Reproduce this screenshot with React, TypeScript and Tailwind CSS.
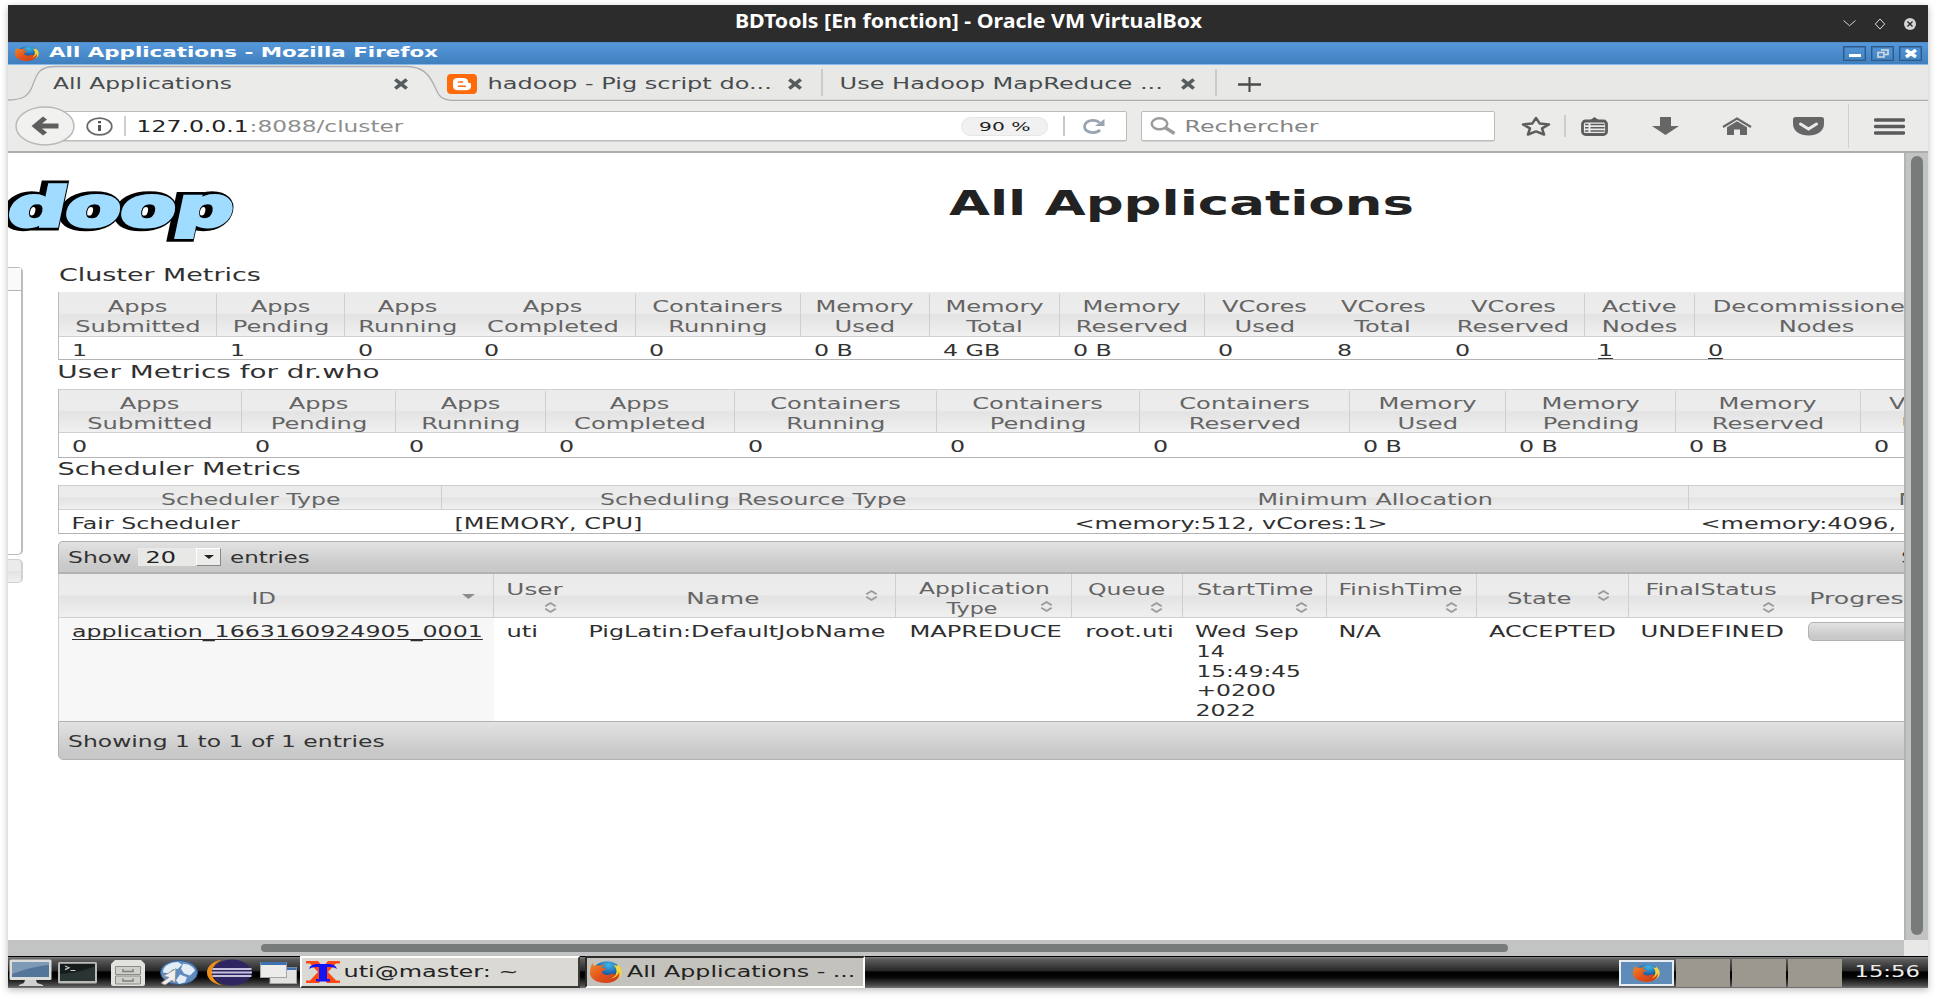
import { useLayoutEffect, useRef, type ReactNode } from "react";

/* Stretches a line of text horizontally until its ink fills w pixels. */
function Fit({ w, children, className = "", ink = "" }: { w: number; children: string; className?: string; ink?: string }) {
  const ref = useRef<HTMLSpanElement>(null);
  useLayoutEffect(() => {
    const el = ref.current;
    if (!el) return;
    const cs = getComputedStyle(el);
    const ctx = document.createElement("canvas").getContext("2d");
    if (!ctx) return;
    ctx.font = `${cs.fontWeight} ${cs.fontSize} ${cs.fontFamily}`;
    const m = ctx.measureText(children);
    const k = w / (m.actualBoundingBoxRight + m.actualBoundingBoxLeft);
    el.style.transform = `translateX(${m.actualBoundingBoxLeft * k}px) scaleX(${k})`;
  }, [w, children]);
  return (
    <span className={"block shrink-0 whitespace-nowrap " + className} style={{ width: w }}>
      <span ref={ref} className={"inline-block origin-left whitespace-pre " + ink}>
        {children}
      </span>
    </span>
  );
}

function Svg({ box, className, children }: { box: string; className: string; children: ReactNode }) {
  return (
    <svg viewBox={box} preserveAspectRatio="none" className={"block shrink-0 " + className}>
      {children}
    </svg>
  );
}

function Firefox({ className }: { className: string }) {
  return (
    <Svg box="0 0 32 32" className={className}>
      <defs>
        <radialGradient id="ffg" cx="0.55" cy="0.2" r="0.8">
          <stop offset="0" stopColor="#3fb6e8" />
          <stop offset="0.6" stopColor="#1b5fa8" />
          <stop offset="1" stopColor="#123a72" />
        </radialGradient>
        <linearGradient id="ffo" x1="0" y1="0" x2="1" y2="1">
          <stop offset="0" stopColor="#ee8a26" />
          <stop offset="0.5" stopColor="#e2521c" />
          <stop offset="1" stopColor="#c93a14" />
        </linearGradient>
      </defs>
      <circle cx="17" cy="14" r="13.5" fill="url(#ffg)" />
      <path d="M27 4c4 5 5 9 4.500 14-.5 5-4 9-8 11l-6-3c6-1 9-6 9-11 0-4-1-7-3-9 2 0 3 .5 4 1z" fill="#f7d43a" />
      <path d="M3 3c0 2 0 3 1 4 2-1 4-1 6 0 1-1 3-2 5-2-2 2-3 3-3 5l4 1c0 2-3 3-4 4 0 5 5 7 9 4 3-1 4 0 5 1-2 4-6 5-9 5 6 1 11-2 12-9 2 8-4 16-13 16C7 32 0 26 0 17 0 11 1 6 3 3z" fill="url(#ffo)" />
    </Svg>
  );
}

function CloseX({ className }: { className: string }) {
  return (
    <Svg box="0 0 14 12" className={"h-3 w-4 " + className}>
      <path d="M2 1.500L12 10.500M12 1.500L2 10.500" stroke="#565b5c" strokeWidth="3.200" />
    </Svg>
  );
}

function Sort({ className }: { className: string }) {
  return (
    <Svg box="0 0 12 11" className={"h-[11px] w-[13px] " + className}>
      <path d="M1.200 4.200L6 1l4.800 3.200M1.200 6.800L6 10l4.800-3.200" fill="none" stroke="#9a9a9a" strokeWidth="1.700" />
    </Svg>
  );
}

const HEAD = "bg-[linear-gradient(#ebebeb_0%,#ececec_48%,#e3e3e3_52%,#f0f0f0_100%)] text-[#646464]";

type Col = { w: string; a: string; b?: string; v: string; line?: boolean; link?: boolean };

const cluster: Col[] = [
  { w: "w-[158px]", a: "Apps", b: "Submitted", v: "1", line: true },
  { w: "w-[128px]", a: "Apps", b: "Pending", v: "1", line: true },
  { w: "w-[126px]", a: "Apps", b: "Running", v: "0" },
  { w: "w-[165px]", a: "Apps", b: "Completed", v: "0", line: true },
  { w: "w-[165px]", a: "Containers", b: "Running", v: "0", line: true },
  { w: "w-[129px]", a: "Memory", b: "Used", v: "0 B", line: true },
  { w: "w-[130px]", a: "Memory", b: "Total", v: "4 GB", line: true },
  { w: "w-[145px]", a: "Memory", b: "Reserved", v: "0 B", line: true },
  { w: "w-[119px]", a: "VCores", b: "Used", v: "0" },
  { w: "w-[118px]", a: "VCores", b: "Total", v: "8" },
  { w: "w-[143px]", a: "VCores", b: "Reserved", v: "0", line: true },
  { w: "w-[110px]", a: "Active", b: "Nodes", v: "1", line: true, link: true },
  { w: "w-[244px]", a: "Decommissioned", b: "Nodes", v: "0", line: true, link: true },
];

const user: Col[] = [
  { w: "w-[183px]", a: "Apps", b: "Submitted", v: "0", line: true },
  { w: "w-[154px]", a: "Apps", b: "Pending", v: "0", line: true },
  { w: "w-[150px]", a: "Apps", b: "Running", v: "0", line: true },
  { w: "w-[189px]", a: "Apps", b: "Completed", v: "0", line: true },
  { w: "w-[202px]", a: "Containers", b: "Running", v: "0", line: true },
  { w: "w-[203px]", a: "Containers", b: "Pending", v: "0", line: true },
  { w: "w-[210px]", a: "Containers", b: "Reserved", v: "0", line: true },
  { w: "w-[156px]", a: "Memory", b: "Used", v: "0 B", line: true },
  { w: "w-[170px]", a: "Memory", b: "Pending", v: "0 B", line: true },
  { w: "w-[185px]", a: "Memory", b: "Reserved", v: "0 B", line: true },
  { w: "w-[142px]", a: "VCores", b: "Used", v: "0", line: true },
];

function Metrics({ cols, head, row }: { cols: Col[]; head: string; row: string }) {
  return (
    <div className="w-[2000px] border-l border-[#bdbdbd]">
      <div className={"flex border-b border-b-[#d0d0d0] " + HEAD + " " + head}>
        {cols.map((c, i) => (
          <div key={i} className={"flex shrink-0 flex-col items-center " + c.w + (c.line ? " border-r border-[#cfcfcf]" : "")}>
            <div className="h-[3px] shrink-0" />
            <span className="scale-x-[1.61] leading-5">{c.a}</span>
            <span className="scale-x-[1.61] leading-5">{c.b}</span>
          </div>
        ))}
      </div>
      <div className={"flex border-b border-[#b4b4b4] text-[#333] " + row}>
        {cols.map((c, i) => (
          <div key={i} className={"shrink-0 pl-[13px] " + c.w}>
            <span className={"inline-block origin-left scale-x-[1.58] leading-5 " + (c.link ? "underline underline-offset-2" : "")}>{c.v}</span>
          </div>
        ))}
      </div>
    </div>
  );
}

function TitleBar() {
  return (
    <div className="flex h-[37px] bg-[#2c2c2c] pl-[728px] text-white">
      <Fit w={466} className='pt-[4px] font-["Noto_Sans",sans-serif] text-[19px] font-bold leading-[25px]'>
        BDTools [En fonction] - Oracle VM VirtualBox
      </Fit>
      <div className="ml-auto mr-3 flex items-center">
        <Svg box="0 0 13 8" className="h-[7px] w-[13px]">
          <path d="M.5.5l6 6 6-6" fill="none" stroke="#ddd" />
        </Svg>
        <Svg box="0 0 12 12" className="ml-[18px] h-3 w-3">
          <path d="M6 1l4.700 5L6 11 1.300 6z" fill="none" stroke="#ddd" />
        </Svg>
        <Svg box="0 0 12 12" className="ml-[18px] h-3 w-3">
          <circle cx="6" cy="6" r="6" fill="#d4d4d4" />
          <path d="M3.500 3.500l5 5M8.500 3.500l-5 5" stroke="#222" strokeWidth="1.200" />
        </Svg>
      </div>
    </div>
  );
}

function WindowBar() {
  const btn = "flex h-[15px] w-[23px] items-center justify-center border border-[#2d5a8c] shadow-[inset_0_0_0_1px_#3f76ad]";
  return (
    <div className="flex h-[23px] items-center border-y border-t-[#4f8ccc] border-b-[#86b9ec] bg-[linear-gradient(#5598da,#3f7fbd)] pb-px pl-[7px] text-white">
      <Firefox className="h-[15px] w-6" />
      <Fit w={389} className="ml-[10px] pb-[2px] text-[14px] font-bold leading-[18px]">
        All Applications - Mozilla Firefox
      </Fit>
      <div className="ml-auto mr-[6px] flex gap-[5px]">
        <div className={btn}>
          <div className="mt-[5px] h-[3px] w-3 bg-white" />
        </div>
        <div className={btn}>
          <Svg box="0 0 12 9" className="h-[9px] w-3">
            <path d="M4 1h7v4.500H8M1 3.500h6v4.500H1z" fill="none" stroke="#d9dde0" strokeWidth="1.600" />
          </Svg>
        </div>
        <div className={btn}>
          <Svg box="0 0 12 9" className="h-[9px] w-3">
            <path d="M1 1l10 7M11 1L1 8" stroke="#fff" strokeWidth="3.400" />
          </Svg>
        </div>
      </div>
    </div>
  );
}

function Tabs() {
  return (
    <div className="relative h-9 bg-[#e8e8e6]">
      <svg className="absolute left-0 top-0 h-9 w-full" viewBox="0 0 1920 36">
        <path d="M0 36V35c13 0 20-3 24-13C29 9 30 1.500 48 1.500H397C415 1.500 421 9 427 22c4 10 7 13 18 13.500H1920V36z" fill="#ebebe9" />
        <path d="M0 35c13 0 20-3 24-13C29 9 30 1.500 48 1.500H397C415 1.500 421 9 427 22c4 10 7 13 18 13.500H1920" fill="none" stroke="#adaeb0" strokeWidth="1.300" />
      </svg>
      <div className="relative flex h-full items-center pt-[2px] text-[16.5px] leading-6 text-[#474c4e]">
        <Fit w={178} className="ml-[45px]">All Applications</Fit>
        <CloseX className="ml-[162px]" />
        <Svg box="0 0 30 20" className="ml-[38px] h-5 w-[30px]">
          <rect width="30" height="20" rx="4" fill="#ff6a0a" />
          <path d="M11 4h5c3.500 0 5 1.300 5 3.500 0 1.300.5 1.500 1.500 1.500s1.500.5 1.500 1.500v2c0 2.500-2 3.700-5 3.700h-8c-3 0-5-1.200-5-3.700V7.500C6 5 8 4 11 4z" fill="#fff" />
          <path d="M11.500 8h4M11.500 12.200h7" stroke="#ff6a0a" strokeWidth="1.600" strokeLinecap="round" />
        </Svg>
        <Fit w={281} className="ml-[12px]">hadoop - Pig script do...</Fit>
        <CloseX className="ml-[17px]" />
        <div className="-mt-[3px] ml-[18px] h-[27px] w-[2px] bg-[#cbcbc9]" />
        <Fit w={320} className="ml-[18px]">Use Hadoop MapReduce ...</Fit>
        <CloseX className="ml-[19px]" />
        <div className="-mt-[3px] ml-[19px] h-[27px] w-[2px] bg-[#cbcbc9]" />
        <Svg box="0 0 24 14" className="ml-[21px] h-[15px] w-[23px]">
          <path d="M0 7h24M12 0v14" stroke="#4c4c4c" strokeWidth="2.200" />
        </Svg>
      </div>
    </div>
  );
}

function NavBar() {
  return (
    <div className="flex h-[52px] items-center border-b-2 border-[#adadad] bg-[#ebebe9] pl-[7px] text-[16px] leading-6">
      <Svg box="0 0 60 40" className="z-10 h-10 w-[60px]">
        <ellipse cx="30" cy="20" rx="29" ry="19" fill="#f1f1f0" stroke="#b9b9b7" strokeWidth="1.500" />
        <path d="M28 10.500l4 3-5 4h16.500v5H27l5 4-4 3L16.500 20z" fill="#5e5e5e" />
      </Svg>
      <div className="-ml-4 flex h-[30px] w-[1068px] items-center rounded-r-[2px] border border-[#bcbcba] bg-white pl-[26px] shadow-[0_1px_0_#d4d4d2]">
        <Svg box="0 0 27 19" className="h-[19px] w-[27px]">
          <ellipse cx="13.500" cy="9.500" rx="12.300" ry="8.400" fill="none" stroke="#686868" strokeWidth="1.700" />
          <path d="M13.500 8v6M13.500 4v2.200" stroke="#555" strokeWidth="3" />
        </Svg>
        <div className="ml-[11px] h-5 w-[2px] bg-[#cfcfcf]" />
        <Fit w={109} className="ml-[12px] pt-[2px] text-[#222]">127.0.0.1</Fit>
        <Fit w={153} className="ml-[4px] pt-[2px] text-[#8e8e8e]">:8088/cluster</Fit>
        <div className="ml-auto flex h-[19px] w-[87px] items-center justify-center rounded-full border border-[#e6e6e6] bg-[#f1f1f1] text-[13px] leading-4 text-[#1f1f1f]">
          <Fit w={51} className="pt-px">90 %</Fit>
        </div>
        <div className="ml-[15px] h-5 w-[2px] bg-[#c6c6c6]" />
        <Svg box="0 0 22 15" className="ml-[18px] mr-[21px] h-[15px] w-[22px]">
          <path d="M16.500 3.500C14.500 2 12.500 1.400 10 1.400 5 1.400 1.500 4 1.500 7.500s3.500 6.100 8.500 6.100c3 0 5.500-1 7-2.600" fill="none" stroke="#98a4b0" strokeWidth="2.800" />
          <path d="M21.500 0v7H12z" fill="#98a4b0" />
        </Svg>
      </div>
      <div className="ml-[14px] flex h-[30px] w-[354px] items-center rounded-[2px] border border-[#bcbcba] bg-white pl-2 text-[#858585] shadow-[0_1px_0_#d4d4d2]">
        <Svg box="0 0 26 18" className="h-[18px] w-[26px]">
          <ellipse cx="9.500" cy="6.800" rx="7.800" ry="5.500" fill="none" stroke="#9b9b9b" strokeWidth="2.500" />
          <path d="M15 10.500l9.500 6" stroke="#9b9b9b" strokeWidth="3.500" />
        </Svg>
        <Fit w={133} className="ml-[10px] pt-[2px]">Rechercher</Fit>
      </div>
      <Svg box="0 0 30 20" className="ml-[26px] h-5 w-[30px]">
        <path d="M15 2l3.800 5.600 9.200.8-7 4 2 6.100-8-3.100-8 3.100 2-6.100-7-4 9.200-.8z" fill="none" stroke="#5d5d5d" strokeWidth="2.500" strokeLinejoin="round" />
      </Svg>
      <div className="ml-[13px] h-[22px] w-[2px] bg-[#cdcdcb]" />
      <Svg box="0 0 27 19" className="ml-[15px] h-[19px] w-[27px]">
        <path d="M8 4l5.500-4L19 4z" fill="#5d5d5d" />
        <rect x="1.500" y="4" width="24" height="13.500" rx="3" fill="#ebebe9" stroke="#5d5d5d" strokeWidth="2.800" />
        <path d="M4 7.500h3.500m2 0h14M4 10.800h3.500m2 0h14M4 14.100h3.500m2 0h14" stroke="#5d5d5d" strokeWidth="1.500" />
      </Svg>
      <Svg box="0 0 27 18" className="ml-[44px] h-[18px] w-[27px]">
        <path d="M8 0h11v9h8L13.500 18 0 9h8z" fill="#666" />
      </Svg>
      <Svg box="0 0 30 18" className="ml-[43px] h-[18px] w-[30px]">
        <path d="M1 10L15 1.500 29 10" fill="none" stroke="#666" strokeWidth="2.200" />
        <path d="M5 10.200L15 4.200l10 6V18h-7v-5.500h-6V18H5z" fill="#666" />
      </Svg>
      <Svg box="0 0 31 19" className="ml-[41px] h-[19px] w-[31px]">
        <path d="M3 0h25c2 0 3 .8 3 2.500V7c0 7-7 11.500-15.500 11.500S0 14 0 7V2.500C0 .8 1 0 3 0z" fill="#666" />
        <path d="M7.500 7l8 5 8-5" fill="none" stroke="#ebebe9" strokeWidth="3" strokeLinecap="round" />
      </Svg>
      <div className="ml-[24px] h-11 w-px bg-[#d0d0ce]" />
      <Svg box="0 0 31 17" className="ml-[25px] h-[17px] w-[31px]">
        <path d="M1.500 2h28M1.500 8.500h28M1.500 15h28" stroke="#5a5a5a" strokeWidth="3.400" strokeLinecap="round" />
      </Svg>
    </div>
  );
}

function Logo() {
  const word = { fontSize: 54, textLength: 336, lengthAdjust: "spacingAndGlyphs" as const, textAnchor: "end" as const };
  return (
    <svg className="h-[70px] w-[240px] shrink-0 overflow-hidden font-bold" viewBox="0 0 240 70">
      <g transform="translate(0 49) skewX(-12)">
        <text {...word} x="219" y="0" fill="#000" stroke="#000" strokeWidth="9" strokeLinejoin="miter" aria-hidden="true">hadoop</text>
        <text {...word} x="222" y="0" fill="#9fdcff" stroke="#9fdcff" strokeWidth="3.500" strokeLinejoin="miter">hadoop</text>
      </g>
    </svg>
  );
}

function Scheduler() {
  return (
    <div className="w-[2300px] border-l border-[#bdbdbd]">
      <div className={"flex h-[25px] border-y border-[#d0d0d0] " + HEAD}>
        <div className="flex w-[383px] justify-center border-r border-[#cfcfcf] pt-1">
          <Fit w={179} className="leading-5">Scheduler Type</Fit>
        </div>
        <div className="flex w-[621px] justify-center pt-1">
          <Fit w={306} className="leading-5">Scheduling Resource Type</Fit>
        </div>
        <div className="flex w-[626px] justify-center border-r border-[#cfcfcf] pt-1">
          <Fit w={233} className="leading-5">Minimum Allocation</Fit>
        </div>
        <div className="flex w-[660px] justify-center pt-1">
          <Fit w={239} className="leading-5">Maximum Allocation</Fit>
        </div>
      </div>
      <div className="flex h-6 border-b border-[#b4b4b4] pt-[5px] text-[#2f2f2f]">
        <div className="w-[383px] pl-[14px]"><Fit w={168} className="leading-[18px]">Fair Scheduler</Fit></div>
        <div className="w-[621px] pl-[14px]"><Fit w={185} className="leading-[18px]">[MEMORY, CPU]</Fit></div>
        <div className="w-[626px] pl-[13px]"><Fit w={309} className="leading-[18px]">{"<memory:512, vCores:1>"}</Fit></div>
        <div className="w-[660px] pl-[13px]"><Fit w={325} className="leading-[18px]">{"<memory:4096, vCores:4>"}</Fit></div>
      </div>
    </div>
  );
}

function Applications() {
  const cell = "shrink-0 border-r border-[#cfcfcf] ";
  const bar = "border border-[#b2b2b2] bg-[linear-gradient(#e2e2e2,#c9c9c9_80%)] text-[#333] ";
  return (
    <div className="mt-[7px] w-[2200px]">
      <div className={"flex h-[33px] items-start rounded-tl-[5px] pl-[9px] pt-[5px] border-b-2 " + bar}>
        <Fit w={63} className="pt-px leading-5">Show</Fit>
        <div className="ml-[7px] mt-px flex h-[18px] w-[83px] items-center bg-[#e8e8e6] pl-[9px] text-[#222]">
          <Fit w={28} className="pt-px leading-[18px]">20</Fit>
          <div className="ml-auto flex h-[18px] w-[25px] items-center justify-center border border-b-[#888] border-l-white border-r-[#888] border-t-white bg-[#ececea]">
            <Svg box="0 0 10 5" className="h-1 w-[10px]"><path d="M0 0h10L5 5z" fill="#222" /></Svg>
          </div>
        </div>
        <Fit w={80} className="ml-[9px] pt-px leading-5">entries</Fit>
        <Fit w={92} className="ml-[1591px] pt-px leading-5">Search:</Fit>
      </div>
      <div className={"flex h-11 border-b border-l border-[#cfcfcf] leading-5 " + HEAD}>
        <div className={cell + "flex w-[435px] pl-[194px] pt-[15px]"}>
          <Fit w={22}>ID</Fit>
          <Svg box="0 0 12 5" className="ml-[187px] mt-[5px] h-[5px] w-[13px]"><path d="M0 0h12L6 5z" fill="#8c8c8c" /></Svg>
        </div>
        <div className="w-[83px] shrink-0 pl-[14px] pt-[6px]">
          <Fit w={56}>User</Fit>
          <Sort className="ml-[36px] mt-[2px]" />
        </div>
        <div className={cell + "flex w-[319px] pl-[111px] pt-[15px]"}>
          <Fit w={71}>Name</Fit>
          <Sort className="ml-[106px] mt-px" />
        </div>
        <div className={cell + "w-[176px] pt-[5px]"}>
          <Fit w={130} className="ml-[23px]">Application</Fit>
          <div className="flex pl-[49px]">
            <Fit w={52}>Type</Fit>
            <Sort className="ml-[43px] mt-[2px]" />
          </div>
        </div>
        <div className={cell + "w-[111px] pl-[16px] pt-[6px]"}>
          <Fit w={77}>Queue</Fit>
          <Sort className="ml-[62px] mt-[2px]" />
        </div>
        <div className={cell + "w-[144px] pl-[14px] pt-[6px]"}>
          <Fit w={116}>StartTime</Fit>
          <Sort className="ml-[98px] mt-[2px]" />
        </div>
        <div className={cell + "w-[150px] pl-[13px] pt-[6px]"}>
          <Fit w={122}>FinishTime</Fit>
          <Sort className="ml-[105px] mt-[2px]" />
        </div>
        <div className={cell + "flex w-[152px] pl-[30px] pt-[15px]"}>
          <Fit w={64}>State</Fit>
          <Sort className="ml-[26px] mt-px" />
        </div>
        <div className="w-[167px] shrink-0 pl-[18px] pt-[6px]">
          <Fit w={130}>FinalStatus</Fit>
          <Sort className="ml-[115px] mt-[2px]" />
        </div>
        <div className="flex w-[200px] shrink-0 pl-[15px] pt-[15px]">
          <Fit w={106}>Progress</Fit>
        </div>
      </div>
      <div className="flex h-[103px] border-l border-[#cfcfcf] text-[#2f2f2f]">
        <div className="w-[435px] shrink-0 bg-[#f7f7f7] pl-[13px] pt-1">
          <Fit w={410} className="leading-5" ink="underline decoration-1 underline-offset-2 [text-decoration-skip-ink:none]">application_1663160924905_0001</Fit>
        </div>
        <div className="w-[83px] shrink-0 pl-[14px] pt-1"><Fit w={28} className="leading-5">uti</Fit></div>
        <div className="w-[319px] shrink-0 pl-[13px] pt-1"><Fit w={295} className="leading-5">PigLatin:DefaultJobName</Fit></div>
        <div className="w-[176px] shrink-0 pl-[15px] pt-1"><Fit w={150} className="leading-5">MAPREDUCE</Fit></div>
        <div className="w-[111px] shrink-0 pl-[15px] pt-1"><Fit w={85} className="leading-5">root.uti</Fit></div>
        <div className="w-[144px] shrink-0 pl-[12px] pt-1">
          <Fit w={103} className="h-5 leading-5">Wed Sep</Fit>
          <Fit w={26} className="ml-[3px] h-5 leading-5">14</Fit>
          <Fit w={102} className="ml-[3px] h-[19px] leading-5">15:49:45</Fit>
          <Fit w={77} className="ml-[3px] h-5 leading-5">+0200</Fit>
          <Fit w={58} className="ml-[2px] h-5 leading-5">2022</Fit>
        </div>
        <div className="w-[150px] shrink-0 pl-[13px] pt-1"><Fit w={42} className="leading-5">N/A</Fit></div>
        <div className="w-[152px] shrink-0 pl-[12px] pt-1"><Fit w={126} className="leading-5">ACCEPTED</Fit></div>
        <div className="w-[167px] shrink-0 pl-[13px] pt-1"><Fit w={141} className="leading-5">UNDEFINED</Fit></div>
        <div className="w-[200px] shrink-0 pl-[12px] pt-1">
          <div className={"h-[19px] rounded-[5px] " + bar} />
        </div>
      </div>
      <div className={"flex h-[39px] rounded-bl-[5px] pl-[9px] pt-[10px] " + bar}>
        <Fit w={317} className="leading-5">Showing 1 to 1 of 1 entries</Fit>
      </div>
    </div>
  );
}

function Page() {
  return (
    <div className="h-[787px] w-[1896px] overflow-hidden bg-white text-[15px]">
      <div className="flex h-[110px] w-[2400px]">
        <div className="pt-[24px]"><Logo /></div>
        <Fit w={463} className="ml-[701px] pt-[26px] text-[34px] font-bold leading-[48px] text-[#222]">
          All Applications
        </Fit>
      </div>
      <div className="flex w-[2400px]">
        <div className="w-[15px] shrink-0 pt-1">
          <div className="h-[288px] rounded-r-[5px] border-y border-r-2 border-[#bcbcbc]">
            <div className="h-[23px] border-b border-[#b4b4b4] bg-[#fafafa]" />
          </div>
          <div className={"mt-1 h-6 rounded-r-[5px] border-y border-r-2 border-[#d0d0d0] " + HEAD} />
        </div>
        <div className="ml-[35px] w-[2300px] shrink-0">
          <div className="h-[29px] text-[17px] leading-[25px] text-[#303030]"><Fit w={202} className="ml-px">Cluster Metrics</Fit></div>
          <Metrics cols={cluster} head="h-[45px] pt-[2px]" row="h-[23px] pt-[3px]" />
          <div className="h-[29px] text-[17px] leading-6 text-[#303030]"><Fit w={320} className="ml-px">User Metrics for dr.who</Fit></div>
          <Metrics cols={user} head="h-11 border-t border-t-[#d0d0d0] pt-px" row="h-[25px] pt-[3px]" />
          <div className="h-[27px] text-[17px] leading-[22px] text-[#303030]"><Fit w={242} className="ml-px">Scheduler Metrics</Fit></div>
          <Scheduler />
          <Applications />
        </div>
      </div>
    </div>
  );
}

function Taskbar() {
  return (
    <div className="flex h-8 border-t border-black bg-[linear-gradient(#808080_0%,#5c5c5c_8%,#262626_45%,#000_48%,#050505_65%,#4c4c4c_92%,#777_100%)] pl-px text-[15.5px] leading-6">
      <div className="flex w-[291px] shrink-0 items-center">
        <Svg box="0 0 43 27" className="h-[27px] w-[43px]">
          <rect x=".5" y=".5" width="42" height="20.500" rx="1.500" fill="#dcdcda" />
          <rect x="3" y="3" width="37" height="15" fill="#54759a" />
          <path d="M3 3h37v3C25 7 12 12 3 15z" fill="#7f9ab5" />
          <path d="M16 21h11l1 3 6 2v1H10v-1l5-2z" fill="#d0d0ce" />
        </Svg>
        <Svg box="0 0 39 22" className="ml-[6px] h-[22px] w-[39px]">
          <rect width="39" height="21.500" rx="1.500" fill="#b9b9b7" />
          <rect x="2" y="1.800" width="35" height="17" fill="#161c1b" />
          <path d="M2 12c14-1 24-3 35-8v15H2z" fill="#2a3533" />
          <path d="M7 4l4 1.800-4 1.800M12.500 8.500h5" fill="none" stroke="#c6d0cc" strokeWidth="1.200" />
        </Svg>
        <Svg box="0 0 34 26" className="ml-[14px] h-[26px] w-[34px]">
          <path d="M4 0h26l4 4v20c0 1-1 2-2 2H2c-1 0-2-1-2-2V4z" fill="#e2e2de" />
          <path d="M4.500 6.500h25v8h-25zM4.500 16h25v8h-25z" fill="#cfcfca" stroke="#8d8d88" strokeWidth="1" />
          <path d="M12 9v2.500h10V9M12 18.500V21h10v-2.500" fill="none" stroke="#80807b" strokeWidth="1.500" />
        </Svg>
        <Svg box="0 0 40 27" className="ml-[13px] h-[26px] w-10">
          <ellipse cx="21" cy="13" rx="18.500" ry="12.500" fill="#5f8bbf" stroke="#31598c" />
          <path d="M8 6c4-3 8-4 12-4l4 3-4 4-6 1-2 4-7-1c0-3 1-5 3-7zM25 4c6 0 10 3 12 7l-5 5-6-2-3-5zM22 15l7 3-2 5-6 2-3-4z" fill="#e3edf6" />
          <path d="M18 9L5 17l6 1-8 6 4 2 7-5 3 3z" fill="#eee" stroke="#8a8a88" strokeWidth=".8" />
        </Svg>
        <Svg box="0 0 46 27" className="ml-[8px] h-[27px] w-[46px]">
          <path d="M16 .5C5 3 1 8 1 13.500S5 24 16 26.500C9 23 6 18 6 13.500S9 4 16 .5z" fill="#ef8d1c" />
          <ellipse cx="26" cy="13.500" rx="19.500" ry="13" fill="#2f2561" />
          <path d="M6.500 10h39M6 13.500h40M6.500 17h39" stroke="#c7c3de" strokeWidth="2.200" />
        </Svg>
        <Svg box="0 0 37 22" className="ml-[8px] h-[22px] w-[37px]">
          <rect x="10" y="5.500" width="26.500" height="16" fill="#e2e2e0" stroke="#a5a5a3" />
          <rect x="10" y="5.500" width="26.500" height="2.500" fill="#3e72b0" />
          <rect x=".5" y=".5" width="26" height="15" fill="#ececea" stroke="#a5a5a3" />
          <rect x=".5" y="0" width="26" height="3" fill="#3e72b0" />
        </Svg>
      </div>
      <div className="-mt-px flex h-8 w-[280px] shrink-0 items-center border-2 border-b-[#3b3b38] border-l-white border-r-[#3b3b38] border-t-white bg-[#dad9d4] pl-1 text-[#222]">
        <Svg box="0 0 34 22" className="h-[22px] w-[34px]">
          <path d="M0 0h12l5 6 5-6h12v2.500h-4L22 11l8 8.500h4V22H21l-4-5-4 5H0v-2.500h4L12 11 4 2.500H0z" fill="#ff4713" />
          <path d="M3 8C4 4 8 3 12 3h10c4 0 8 1 9 5-3-2-7-2-10-2v12h3v2.500H10V18h3V6C10 6 6 6 3 8z" fill="#1414f5" />
        </Svg>
        <Fit w={172} className="ml-[5px]">uti@master: ~</Fit>
      </div>
      <div className="-mt-px ml-[5px] flex h-8 w-[280px] shrink-0 items-center border-2 border-b-white border-l-[#2c2c2a] border-r-white border-t-[#2c2c2a] bg-[#c4c2bc] pl-[3px] text-[#222]">
        <Firefox className="h-[22px] w-[32px]" />
        <Fit w={227} className="ml-[5px]">All Applications - ...</Fit>
      </div>
      <div className="ml-auto flex shrink-0 items-center gap-[2px]">
        <div className="flex h-[26px] w-[55px] items-center justify-center border-2 border-[#e9eef3] bg-[#5e8bb7]">
          <Firefox className="h-[18px] w-[27px]" />
        </div>
        <div className="h-7 w-[54px] bg-[#9d988f]" />
        <div className="h-7 w-[54px] bg-[#9d988f]" />
        <div className="h-7 w-[54px] bg-[#9d988f]" />
      </div>
      <Fit w={63} className="ml-[14px] mr-[9px] mt-[3px] text-[15px] text-[#ededed]">15:56</Fit>
    </div>
  );
}

export default function App() {
  return (
    <div className='h-[999px] w-[1936px] overflow-hidden bg-white pl-2 pt-[5px] font-["DejaVu_Sans",sans-serif]'>
      <div className="flex w-[1920px] flex-col shadow-[0_2px_7px_rgba(0,0,0,0.28)]">
        <TitleBar />
        <WindowBar />
        <Tabs />
        <NavBar />
        <div className="flex bg-[#c2c4c3]">
          <Page />
          <div className="flex w-6 justify-center border-l-2 border-[#b3b5b4] pb-[5px] pt-[3px]">
            <div className="w-3 rounded-full bg-[#777b7a]" />
          </div>
        </div>
        <div className="flex h-4 bg-[#c2c4c3]">
          <div className="ml-[253px] mt-1 h-2 w-[1247px] rounded-full bg-[#777b7a]" />
          <div className="ml-auto h-4 w-6 bg-[#e8e8e7]" />
        </div>
        <Taskbar />
      </div>
    </div>
  );
}
